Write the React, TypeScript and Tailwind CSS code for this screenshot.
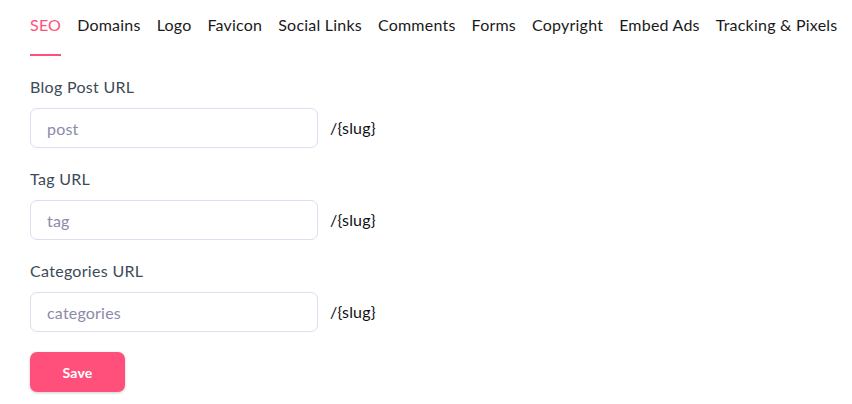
import React from "react";

const tabs = ["SEO","Domains","Logo","Favicon","Social Links","Comments","Forms","Copyright","Embed Ads","Tracking & Pixels"];

const fields = [
  { label: "Blog Post URL", ph: "post" },
  { label: "Tag URL", ph: "tag" },
  { label: "Categories URL", ph: "categories" },
];

export default function App() {
  return (
    <div className="w-[852px] h-[404px] bg-white overflow-hidden" style={{ fontFamily: "Lato, 'Noto Sans', sans-serif" }}>
      <div className="flex gap-[16px] pl-[30px]">
        {tabs.map((t, i) => (
          <div key={t} className={`pt-[13px] pb-[17px] border-b-2 text-[16px] tracking-[0.22px] leading-[24px] whitespace-nowrap ${i === 0 ? "border-[#ff4f7b] text-[#ff4f7b]" : "border-transparent text-[#1a1a1a]"}`}>
            {t}
          </div>
        ))}
      </div>
      <div className="pl-[30px] pt-[19px] flex flex-col">
        {fields.map((f) => (
          <div key={f.label} className="mb-[19px]">
            <div className="text-[16px] tracking-[0.3px] leading-[24px] text-[#3d4a57]">{f.label}</div>
            <div className="mt-[9px] flex items-center gap-[12px]">
              <input
                placeholder={f.ph}
                className="w-[288px] h-[40px] border border-[#dedcee] rounded-[7px] pl-[16px] text-[16px] tracking-[0.2px] placeholder:text-[#8d89aa] outline-none"
              />
              <span className="text-[16px] tracking-[0.2px] text-[#111]">/{"{slug}"}</span>
            </div>
          </div>
        ))}
        <button className="mt-[1px] w-[95px] h-[40px] rounded-[7px] bg-[#ff4f7b] text-white font-bold text-[14px] tracking-[0.2px] shadow-[0_1px_3px_rgba(0,0,0,0.2)]">
          Save
        </button>
      </div>
    </div>
  );
}
